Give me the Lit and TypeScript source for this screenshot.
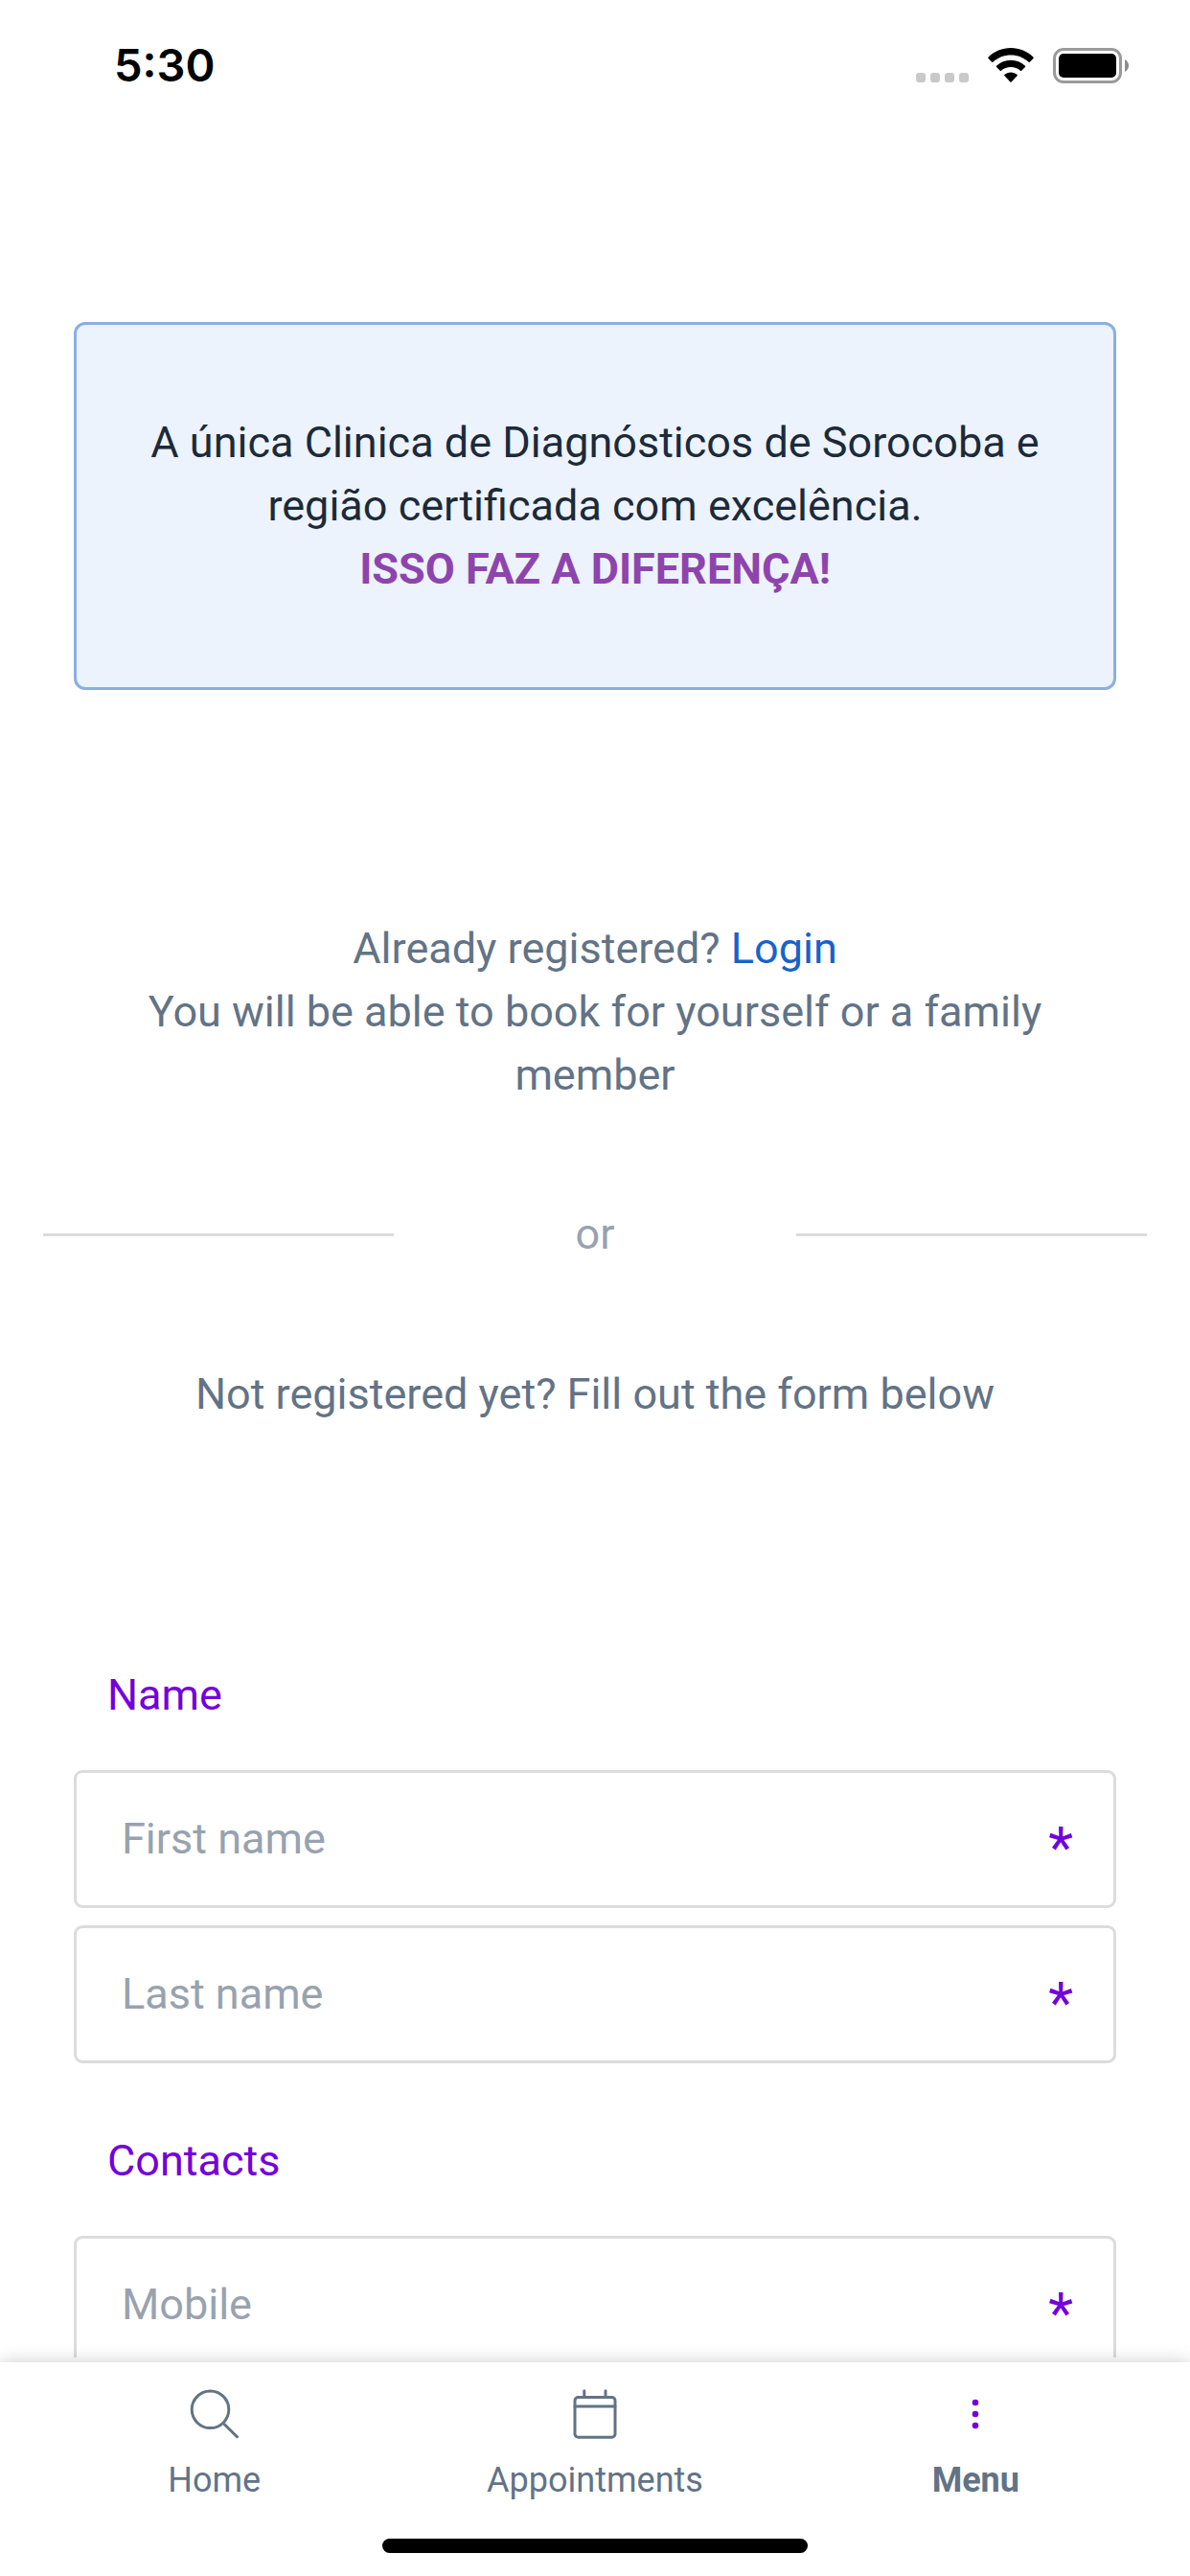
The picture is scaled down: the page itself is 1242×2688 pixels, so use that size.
import { LitElement, html, css, svg } from "lit";
import { customElement, property } from "lit/decorators.js";
import { classMap } from "lit/directives/class-map.js";

@customElement("status-bar")
class StatusBar extends LitElement {
  static styles = css`
    :host {
      display: flex;
      align-items: center;
      justify-content: space-between;
      flex: none;
      height: 136px;
      padding: 0 64px 0 119px;
      background: #fff;
    }
    .time {
      font: 600 47px/60px Inter, "Liberation Sans", sans-serif;
      color: #000;
    }
    .indicators {
      display: flex;
      align-items: flex-end;
      gap: 20px;
    }
    .signal,
    .wifi,
    .battery {
      display: block;
    }
  `;

  render() {
    return html`
      <span class="time">5:30</span>
      <div class="indicators">
        <svg class="signal" width="55" height="37" viewBox="0 0 55 37" fill="#c9c9c9" aria-hidden="true">
          ${[0, 15, 30, 45].map((x) => svg`<rect x=${x} y="26" width="10" height="10" rx="3"></rect>`)}
        </svg>
        <svg class="wifi" width="48" height="37" viewBox="0 0 48 37" fill="#000" aria-hidden="true">
          <path d="M24 0C33 0 41.500 3.500 47.600 9.700Q48 10.300 47.500 10.900L43.800 14.700Q43.200 15.300 42.600 14.700C37.500 9.900 31 7.400 24 7.400S10.500 9.900 5.400 14.700Q4.800 15.300 4.200 14.700L.5 10.900Q0 10.300 .4 9.700C6.500 3.500 15 0 24 0Z"></path>
          <path d="M24 12.800C29.700 12.800 35 14.900 39 18.700Q39.500 19.300 39 19.900L35.200 23.800Q34.600 24.300 34 23.800C31.300 21.400 27.800 20.100 24 20.100S16.700 21.400 14 23.800Q13.400 24.300 12.800 23.800L9 19.900Q8.500 19.300 9 18.700C13 14.900 18.300 12.800 24 12.800Z"></path>
          <path d="M24 25.400C26.500 25.400 28.900 26.300 30.700 27.900Q31.200 28.500 30.700 29.100L24.600 35.500Q24 36.100 23.400 35.500L17.300 29.100Q16.800 28.500 17.300 27.900C19.100 26.300 21.500 25.400 24 25.400Z"></path>
        </svg>
        <svg class="battery" width="79" height="37" viewBox="0 0 79 37" aria-hidden="true">
          <rect x="1.500" y="1.500" width="69" height="34" rx="9.500" fill="none" stroke="#9a9a9a" stroke-width="3"></rect>
          <rect x="6" y="6" width="60" height="25" rx="5" fill="#000"></rect>
          <path d="M75 12Q79 14.500 79 18.500T75 25Z" fill="#8c8c8c"></path>
        </svg>
      </div>
    `;
  }
}

@customElement("form-field")
class FormField extends LitElement {
  @property() label = "";
  @property() type = "text";

  static styles = css`
    :host {
      display: block;
    }
    .field {
      display: flex;
      align-items: center;
      gap: 24px;
      height: 144px;
      box-sizing: border-box;
      padding: 0 42px 0 47px;
      border: 3px solid #dcdcdc;
      border-radius: 9px;
      background: #fff;
    }
    .control {
      flex: 1;
      min-width: 0;
      height: 66px;
      padding: 0;
      border: 0;
      outline: 0;
      background: none;
      color: #1c2a39;
      font: 400 45px/66px Roboto, sans-serif;
    }
    .control::placeholder {
      color: #98a2af;
      opacity: 1;
    }
    .required {
      padding-top: 18px;
      color: #7300dd;
      font: 400 60px/66px Roboto, sans-serif;
    }
  `;

  render() {
    return html`
      <label class="field">
        <input class="control" type=${this.type} placeholder=${this.label} aria-label=${this.label} required />
        <span class="required" aria-hidden="true">*</span>
      </label>
    `;
  }
}

@customElement("tab-bar")
class TabBar extends LitElement {
  static styles = css`
    :host {
      display: block;
      flex: none;
      margin-top: 5px;
      background: #fff;
      box-shadow: 0 0 18px rgba(0, 0, 0, 0.2);
    }
    .tabs {
      display: flex;
      padding: 27px 25px 37px;
    }
    .tab {
      display: flex;
      flex: 1;
      flex-direction: column;
      align-items: center;
      gap: 18px;
      color: #627386;
      font: 400 36px/48px Roboto, sans-serif;
      text-decoration: none;
    }
    .active {
      font-weight: 700;
    }
    .icon {
      display: block;
      fill: none;
      stroke: currentColor;
      stroke-width: 3;
      stroke-linecap: round;
      stroke-linejoin: round;
    }
    .active .icon {
      fill: #7300dd;
      stroke: none;
    }
    .indicator {
      width: 444px;
      height: 15px;
      margin: 0 auto;
      border-radius: 8px;
      background: #000;
    }
    .safe-area {
      padding-bottom: 24px;
    }
  `;

  private tabs = [
    {
      name: "Home",
      shape: svg`<circle cx="22.500" cy="22.300" r="19.300"></circle><path d="M37 37.500L50.500 50.800"></path>`,
    },
    {
      name: "Appointments",
      shape: svg`<rect x="6" y="9.500" width="42" height="41.700" rx="3.500"></rect><path d="M6 19H48M15.800 9V2.800M38 9V2.800"></path>`,
    },
    {
      name: "Menu",
      active: true,
      shape: svg`<circle cx="27" cy="15" r="3.300"></circle><circle cx="27" cy="27" r="3.300"></circle><circle cx="27" cy="39" r="3.300"></circle>`,
    },
  ];

  render() {
    return html`
      <nav class="tabs">
        ${this.tabs.map(
          (tab) => html`
            <a class=${classMap({ tab: true, active: !!tab.active })} href="#${tab.name.toLowerCase()}">
              <svg class="icon" width="54" height="54" viewBox="0 0 54 54" aria-hidden="true">${tab.shape}</svg>
              <span>${tab.name}</span>
            </a>
          `
        )}
      </nav>
      <div class="safe-area"><div class="indicator"></div></div>
    `;
  }
}

@customElement("app-root")
class AppRoot extends LitElement {
  static styles = css`
    :host {
      display: flex;
      flex-direction: column;
      height: 100vh;
      overflow: hidden;
      background: #fff;
      color: #627386;
      font: 400 45px/66px Roboto, sans-serif;
    }
    .content {
      flex: 1;
      min-height: 0;
      overflow-y: auto;
      scrollbar-width: none;
      padding: 200px 77px 0;
    }
    p {
      margin: 0;
      text-align: center;
    }
    .banner {
      padding: 90px 64px;
      border: 3px solid #8aafe4;
      border-radius: 12px;
      background: #ecf3fd;
      color: #1c2a39;
    }
    .highlight {
      display: block;
      color: #8e44ad;
      font-weight: 700;
    }
    .intro {
      padding: 237px 64px 100px;
    }
    .link {
      color: #1763cb;
      text-decoration: none;
    }
    .divider {
      display: grid;
      grid-template-columns: 366fr 420fr 366fr;
      align-items: center;
      margin: 0 -32px;
      color: #98a2af;
      text-align: center;
    }
    .rule {
      height: 3px;
      background: #dcdcdc;
    }
    .outro {
      padding: 101px 0 248px;
    }
    .group {
      display: flex;
      flex-direction: column;
      gap: 18px;
      min-width: 0;
      margin: 0 0 69px;
      padding: 0;
      border: 0;
    }
    .legend {
      margin-bottom: 45px;
      padding: 0 35px;
      color: #7300dd;
    }
  `;

  render() {
    return html`
      <status-bar></status-bar>
      <main class="content">
        <p class="banner">
          A única Clinica de Diagnósticos de Sorocoba e região certificada com excelência.
          <strong class="highlight">ISSO FAZ A DIFERENÇA!</strong>
        </p>
        <p class="intro">
          Already registered? <a class="link" href="#login">Login</a><br />
          You will be able to book for yourself or a family member
        </p>
        <div class="divider">
          <span class="rule"></span><span>or</span><span class="rule"></span>
        </div>
        <p class="outro">Not registered yet? Fill out the form below</p>
        <form>
          <fieldset class="group">
            <legend class="legend">Name</legend>
            <form-field label="First name"></form-field>
            <form-field label="Last name"></form-field>
          </fieldset>
          <fieldset class="group">
            <legend class="legend">Contacts</legend>
            <form-field label="Mobile" type="tel"></form-field>
          </fieldset>
        </form>
      </main>
      <tab-bar></tab-bar>
    `;
  }
}
